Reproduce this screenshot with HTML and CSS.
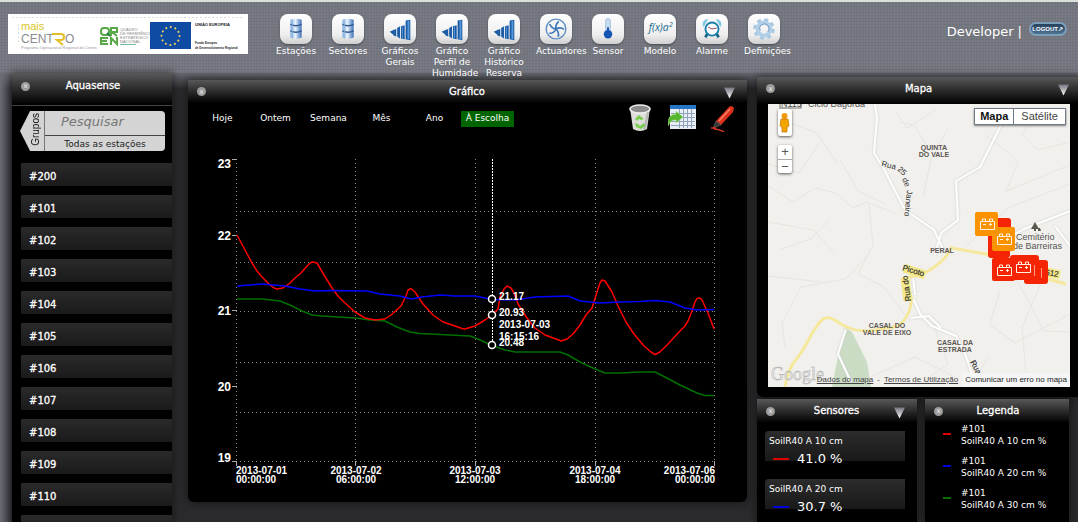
FILE: index.html
```html
<!DOCTYPE html>
<html lang="pt">
<head>
<meta charset="utf-8">
<title>Aquasense</title>
<link rel="stylesheet" href="styles.css">
</head>
<body>
<svg class="defs" width="0" height="0" aria-hidden="true">
  <defs>
    <linearGradient id="arrow" x1="0" y1="0" x2="0" y2="1"><stop offset="0" stop-color="#77737f"/><stop offset="1" stop-color="#fff"/></linearGradient>
    <linearGradient id="steel" x1="0" y1="0" x2="1" y2="0"><stop offset="0" stop-color="#7fb0e4"/><stop offset=".45" stop-color="#e9f4fe"/><stop offset="1" stop-color="#3a6fb7"/></linearGradient>
    <symbol id="tank" viewBox="0 0 32 32"><path fill="url(#steel)" d="M10 6q6-2 12 0v19q-6 3-12 0z"/><path fill="none" stroke="#31588f" stroke-width="1.500" d="M10 11q6 3 12 0M10 18q6 3 12 0"/><path stroke="#8fb0d8" d="M12 6v20"/></symbol>
    <symbol id="bars" viewBox="0 0 32 32"><path fill="#1c5ca6" d="M5 19l4-2v5zM9 17l3-1v8l-3-1zM13 15l3-2v13l-3-2zM17 13l4-1v15l-4-1zM22 7l5-1v22l-5-1z"/><path fill="#5797d7" d="M24 7h2v20h-2zM18 13h1v13h-1z"/></symbol>
  </defs>
</svg>

<header class="top">
  <svg class="banner" viewBox="0 0 240 40" role="img" aria-label="Mais Centro, QREN, União Europeia">
    <rect width="240" height="40" fill="#fff"/>
    <path stroke="#ddd" stroke-dasharray="2 2" d="M4 3.500H236M10.500 10v18"/>
    <g class="logo-text">
      <text x="13" y="16" font-size="11" fill="#d9c526">mais</text>
      <text x="13" y="29" font-size="12" fill="#8a8b8e">CENT</text>
      <text x="57" y="29" font-size="12" fill="#8a8b8e">O</text>
      <path fill="none" stroke="#e3bd28" stroke-width="2" d="M44 20h9q3 0 3 3t-3 3h-4l6 5"/>
      <text x="13" y="35" font-size="4" fill="#999">Programa Operacional Regional do Centro</text>
      <g fill="none" stroke="#59a94a" stroke-width="2"><rect x="93" y="14" width="8" height="7" rx="3"/><path stroke="#247c42" d="M99 19l3 3"/><path d="M103 22v-8h6v4h-5l5 4M100 24h-7v6h7M93 27h6M103 31v-7l6 6v-7"/></g>
      <g font-size="4" fill="#888"><text x="112" y="17">QUADRO</text><text x="112" y="21">DE REFERÊNCIA</text><text x="112" y="25">ESTRATÉGICO</text><text x="112" y="29">NACIONAL</text></g>
      <path stroke="#7bb99f" d="M112 30.500h16"/>
      <rect x="142" y="8" width="41" height="27" fill="#0f4aa3"/>
      <circle cx="162.500" cy="22" r="9" fill="none" stroke="#f4d65c" stroke-width="2" stroke-linecap="round" stroke-dasharray="0.100 4.612"/>
      <g fill="#222" font-weight="bold"><text x="187" y="12" font-size="4">UNIÃO EUROPEIA</text><text x="187" y="30" font-size="3">Fundo Europeu</text><text x="187" y="35" font-size="3">de Desenvolvimento Regional</text></g>
    </g>
  </svg>

  <nav class="menu">
    <a href="#"><svg><use href="#tank"/></svg><span>Estações</span></a>
    <a href="#"><svg><use href="#tank"/></svg><span>Sectores</span></a>
    <a href="#"><svg><use href="#bars"/></svg><span>Gráficos Gerais</span></a>
    <a href="#"><svg><use href="#bars"/></svg><span>Gráfico Perfil de Humidade</span></a>
    <a href="#"><svg><use href="#bars"/></svg><span>Gráfico Histórico Reserva</span></a>
    <a href="#"><svg viewBox="0 0 32 32"><g fill="none" stroke="#5f8fc6" stroke-width="1.500"><circle cx="16" cy="16" r="10.500"/><g stroke="#3c75b8" stroke-width="1.800"><path id="vane" d="M16 16q-1-5 3-8"/><use href="#vane" transform="rotate(72 16 16)"/><use href="#vane" transform="rotate(144 16 16)"/><use href="#vane" transform="rotate(216 16 16)"/><use href="#vane" transform="rotate(288 16 16)"/></g></g></svg><span>Actuadores</span></a>
    <a href="#"><svg viewBox="0 0 32 32"><rect x="13.500" y="5" width="5" height="16" rx="2" fill="#c5dbef" stroke="#a6bfd9"/><path stroke="#1954ad" stroke-width="2" d="M16 14v7"/><circle cx="16" cy="21.500" r="4.500" fill="#1556b4"/></svg><span>Sensor</span></a>
    <a href="#"><svg viewBox="0 0 32 32"><text class="formula" x="4" y="18">f(x)a²</text></svg><span>Modelo</span></a>
    <a href="#"><svg viewBox="0 0 32 32"><path fill="#7cc8e6" d="M6 11q0-5 6-6l-5 9zM26 11q0-5-6-6l5 9z"/><path stroke="#176386" stroke-width="3" d="M11 21l-2 4M21 21l2 4"/><circle cx="16" cy="16" r="7" fill="#f9fdff" stroke="#1c7fab" stroke-width="2"/><path fill="none" stroke="#a03b47" d="M12 14l4 2 5-1"/></svg><span>Alarme</span></a>
    <a href="#"><svg viewBox="0 0 32 32"><circle cx="16" cy="16" r="9.500" fill="none" stroke="#a6c7e4" stroke-width="4" stroke-dasharray="4 3.460"/><circle cx="16" cy="16" r="7" fill="none" stroke="#b2cfe8" stroke-width="4"/><path fill="none" stroke="#6793bd" d="M12 18a5 5 0 1 1 8 1"/></svg><span>Definições</span></a>
  </nav>

  <div class="user"><span>Developer |</span><button class="logout" type="button">LOGOUT↗</button></div>
</header>

<main class="board">
  <aside class="panel stations">
    <div class="bar"><button class="close" type="button" aria-label="Fechar">x</button><h2>Aquasense</h2></div>
    <form class="search">
      <button class="groups" type="button"><span>Grupos</span></button>
      <div class="fields">
        <input type="text" aria-label="Pesquisar" placeholder="Pesquisar">
        <button type="button">Todas as estações</button>
      </div>
    </form>
    <ul class="list">
      <li><a href="#">#200</a></li><li><a href="#">#101</a></li><li><a href="#">#102</a></li><li><a href="#">#103</a></li>
      <li><a href="#">#104</a></li><li><a href="#">#105</a></li><li><a href="#">#106</a></li><li><a href="#">#107</a></li>
      <li><a href="#">#108</a></li><li><a href="#">#109</a></li><li><a href="#">#110</a></li><li><a href="#" aria-label="Mais estações"></a></li>
    </ul>
  </aside>

  <section class="panel chart">
    <div class="bar foldable"><button class="close" type="button" aria-label="Fechar">x</button><h2>Gráfico</h2><button class="fold" type="button" aria-label="Recolher"><svg viewBox="0 0 12 12"><path fill="url(#arrow)" d="M0 0h12L6 12z"/></svg></button></div>
    <div class="tools">
      <div class="periods">
        <button type="button">Hoje</button><button type="button">Ontem</button><button type="button">Semana</button><button type="button">Mês</button><button type="button">Ano</button><button type="button" class="active">À Escolha</button>
      </div>
      <div class="actions">
        <button type="button" aria-label="Limpar"><svg viewBox="0 0 28 28"><path fill="#dededa" d="M4 4h20l-3 21q-7 4-14 0z"/><ellipse cx="14" cy="5" rx="10" ry="4" fill="#8b8d8b" stroke="#eee" stroke-width="1.500"/><path fill="#b5b7b3" d="M21 8h2l-3 17-3 1z"/><path fill="#79ce50" d="M9 15l4-4 5 4-3 1-2-1-2 2zM9 19l3 1 2 2 4-3 1 3-4 3-5-2z"/></svg></button>
        <button type="button" aria-label="Exportar"><svg viewBox="0 0 28 28"><path fill="#e8eef4" d="M2 1h26v24H2z"/><path fill="#2775c5" d="M2 1h26v4H2z"/><path stroke="#8fa4bc" d="M3 9.500h24M3 13.500h24M3 17.500h24M3 21.500h24M11.500 5v19M15.500 5v19M19.500 5v19M23.500 5v19"/><path fill="#56b62e" stroke="#b8e6a0" stroke-width=".5" d="M0 22q-1-12 8-12V7l7 6-7 6v-3q-5-1-8 6z"/></svg></button>
        <button type="button" aria-label="Editar"><svg viewBox="0 0 28 28"><path fill="#dc321c" d="M18 4q3-4 6 0l-1 4L11 21l-5-4z"/><path fill="none" stroke="#ff806a" stroke-width="1.500" d="M20 5L9 17"/><path fill="#383838" stroke="#777" stroke-width=".5" d="M6 17l5 4-8 3z"/><path fill="none" stroke="#d43220" stroke-width="1.500" d="M1 24l5 0-2 1q5 0 10 3"/></svg></button>
      </div>
    </div>
    <svg class="plot" viewBox="188 133 559 367" role="img" aria-label="Gráfico de humidade do solo">
      <g class="grid">
        <path d="M236.500 159V461M355.500 159V461M475.500 159V461M595.500 159V461M714.500 159V461"/>
        <path d="M236 211.500H715M236 262.500H715M236 311.500H715M236 362.500H715M236 412.500H715M236 461.500H715"/>
      </g>
      <path class="ticks" d="M232 159.500h5M232 235.500h5M232 310.500h5M232 386.500h5M232 461.500h5M236.500 461v5M355.500 461v5M475.500 461v5M595.500 461v5M714.500 461v5"/>
      <g class="labels y"><text x="231" y="168">23</text><text x="231" y="240">22</text><text x="231" y="315">21</text><text x="231" y="391">20</text><text x="231" y="462">19</text></g>
      <g class="labels"><text x="236" y="474">2013-07-01</text><text x="236" y="483">00:00:00</text></g>
      <g class="labels mid"><text x="356" y="474">2013-07-02</text><text x="356" y="483">06:00:00</text><text x="475" y="474">2013-07-03</text><text x="475" y="483">12:00:00</text><text x="595" y="474">2013-07-04</text><text x="595" y="483">18:00:00</text></g>
      <g class="labels end"><text x="715" y="474">2013-07-06</text><text x="715" y="483">00:00:00</text></g>
      <polyline class="line green" points="237,299 262,299 280,301 290,305 302,311 312,315 322,316 355,318 370,320 385,321 397,327 410,332 420,333.500 450,335 470,336 478,339 492,345.500 505,350 515,352 560,352 568,355 580,362 595,369 605,373 620,373 640,372 655,372 665,377 680,385 697,393 705,395.500 714,395.500"/>
      <polyline class="line red" points="237,235 245,250 252,263 257,271 262,277 270,285 274,288 277,289 283,288 290,283 295,278 301,273 308,265 311,262.500 313,262 317,263 324,275 332,288 338,296 344,302 355,312 365,318 375,320 385,319 391,315 401,306 406,296 408,290 411,288.500 415,292 423,304 433,315 443,322 455,326 462,328.500 465,329 475,326 485,320 492,315 498,309 500,297 504,289 507,286 511,288 514,293 518,304 527,318 535,328 545,335 556,339 561,341 567,339 573,334 580,325 586,315 592,308 597,292 600,283 602,280 605,281 612,292 618,306 626,322 634,334 644,346 651,352 655,354.500 660,352 668,344 680,331 685,326 688,321 692,311 695,302 697,298.500 700,298 702,300 708,313 714,329"/>
      <polyline class="line blue" points="237,286 250,285 262,284 285,286 300,289 315,291 330,290.500 367,291 380,294 400,296 411,299 422,297 440,295 455,296 475,296 485,298 492,299.500 515,300 535,297 568,296 580,301 600,303 620,302 640,301.500 655,300.500 670,302 685,308 697,310 714,309.500"/>
      <path class="cursor" d="M492.500 159V346"/>
      <g class="dots"><circle cx="492" cy="299" r="3.500"/><circle cx="492" cy="315" r="3.500"/><circle cx="492" cy="345" r="3.500"/></g>
      <g class="labels"><text x="499" y="300">21.17</text><text x="499" y="316">20.93</text><text x="499" y="328">2013-07-03</text><text x="499" y="340">16:15:16</text><text x="499" y="346">20.48</text></g>
    </svg>
  </section>

  <div class="side">
    <section class="panel mapbox">
      <div class="bar foldable"><button class="close" type="button" aria-label="Fechar">x</button><h2>Mapa</h2><button class="fold" type="button" aria-label="Recolher"><svg viewBox="0 0 12 12"><path fill="url(#arrow)" d="M0 0h12L6 12z"/></svg></button></div>
      <div class="map">
        <svg class="tiles" viewBox="768 104 302 283" preserveAspectRatio="xMidYMid slice" role="img" aria-label="Mapa das estações">
          <rect x="700" y="50" width="450" height="400" fill="#f1f0ec"/>
          <path fill="#cbdcc5" d="M845 327l7 5 15 30 4 25h-39l6-31z"/>
          <g class="minor">
            <path d="M768 186l25 16 22-14 21 5 17 15 13-6 29 11M782 120l35 13 21 31M840 160l18 31 26 12M895 111l12 17 30-19M930 151l-16-26-14-3M1038 107l-16 28 16 15 32-8M985 135l20 15 13 12M1018 162l-12 29 64-26M966 246l42-38 62-24M768 222l45 8 21 22M820 142l-21 31-31-9M785 347l-3-24 19-36 45-8 24-26M869 205l4 40-15 29 25 12 27 35M1000 290l-10 35 25 18 55-29M1040 285l-18 42 5 60M934 326l14 38-33 23M971 387l18-32M872 376l43-19 40 20M1014 275l30 56 26 1M768 276l54 6M779 250l32-11 18-19M948 128l-17 32-8 37"/>
          </g>
          <g class="road">
            <path d="M875 104l2 14-3 35 11 18 20 39 29 20 10 21M1003 121l-23 46-24 14 2 39M958 220l-17 13-6 22M1070 211l-46 18-27 15M972 284M920 267l-7 10 2 18M914 300l6 14 12 12 24 10 10 20 10 31"/>
            <path d="M846 329l-8 25 13 28M911 318l18-2 12 12M1055 226l15 20"/>
          </g>
          <path class="main-road" d="M785 387q2-18 13-30c10-13 15-30 25-38 8-5 15 5 24 8 18 8 33 2 52-1q14-14 12-30l-8-17 22-6q21-12 26-25l41 7 30 17 44 12"/>
          <g class="street"><text transform="translate(881 166) rotate(14)">Rua</text><text transform="translate(897 170) rotate(42)">25</text><text transform="translate(902 179) rotate(68)">de</text><text transform="translate(907 190) rotate(96)">Janeiro</text></g>
          <g class="street bold"><path class="halo" d="M908 301l-3-23M904 268l21 7M1046 272l14 3"/><text transform="translate(911 301) rotate(-98)">Rua do</text><text transform="translate(902 270) rotate(17)">Picoto</text><text transform="translate(1045 275) rotate(8)">512</text><text transform="translate(970 362) rotate(62)">Rua</text></g>
          <g class="place"><text x="934" y="150">QUINTA</text><text x="934" y="157">DO VALE</text><text x="942" y="253">PERAL</text><text x="887" y="328">CASAL DO</text><text x="887" y="335">VALE DE EIXO</text><text x="955" y="345">CASAL DA</text><text x="955" y="352">ESTRADA</text></g>
          <g class="poi"><rect x="780" y="98" width="21" height="10" fill="none" stroke="#777"/><text x="781" y="107">N115</text><text x="808" y="107">Ciclo Dagorda</text><text x="1016" y="240">Cemitério</text><text x="1013" y="249">de Barreiras</text><path fill="#59594f" d="M1035 222l4 7h-3v2h-2v-2h-3zM1038 228h2l1 3h-3z"/></g>
          <g fill="#f52405"><rect x="988" y="218" width="23" height="22" rx="3"/><rect x="988" y="236" width="22" height="22" rx="3"/><rect x="992" y="258" width="23" height="23" rx="2"/><rect x="1010" y="255" width="29" height="25" rx="3"/><rect x="1024" y="260" width="24" height="24" rx="3"/></g>
          <path stroke="#ff9b8a" d="M1034.500 265v11M1041.500 268v10"/>
          <g fill="#fb9200"><rect x="975" y="212" width="23" height="24" rx="2"/><rect x="992" y="227" width="23" height="24" rx="2"/></g>
          <g fill="none" stroke="#fff4df"><g id="bat"><path d="M980.500 221.500h14v8h-14zM982.500 221v-2h3v2M989.500 221v-2h3v2M983 224.500h3M989 224.500h3M990.500 223v3"/></g><use href="#bat" x="17" y="15"/><use href="#bat" x="17" y="46"/><use href="#bat" x="36" y="43"/></g>
          <text class="brand" x="771" y="380">Google</text>
        </svg>
        <button class="pegman" type="button" aria-label="Street View"><svg viewBox="0 0 13 24"><circle cx="6.500" cy="5" r="3" fill="#ef9b08"/><path fill="#f5a500" stroke="#bd7100" stroke-width=".7" d="M3 8h7l1 7-2 1v5H4v-5l-2-1z"/></svg></button>
        <div class="zoom"><button type="button" aria-label="Aproximar">+</button><button type="button" aria-label="Afastar">−</button></div>
        <div class="kinds"><button type="button" class="on">Mapa</button><button type="button">Satélite</button></div>
        <div class="credits"><a href="#">Dados do mapa</a><span>-</span><a href="#">Termos de Utilização</a><a href="#" class="report">Comunicar um erro no mapa</a></div>
      </div>
    </section>

    <div class="lower">
      <section class="panel sensors">
        <div class="bar foldable"><button class="close" type="button" aria-label="Fechar">x</button><h2>Sensores</h2><button class="fold" type="button" aria-label="Recolher"><svg viewBox="0 0 12 12"><path fill="url(#arrow)" d="M0 0h12L6 12z"/></svg></button></div>
        <article><h3>SoilR40 A 10 cm</h3><p><i class="red"></i>41.0 %</p></article>
        <article><h3>SoilR40 A 20 cm</h3><p><i class="blue"></i>30.7 %</p></article>
      </section>
      <section class="panel legend">
        <div class="bar"><button class="close" type="button" aria-label="Fechar">x</button><h2>Legenda</h2></div>
        <ul>
          <li><i class="red"></i><span>#101<br>SoilR40 A 10 cm %</span></li>
          <li><i class="blue"></i><span>#101<br>SoilR40 A 20 cm %</span></li>
          <li><i class="green"></i><span>#101<br>SoilR40 A 30 cm %</span></li>
        </ul>
      </section>
    </div>
  </div>
</main>
</body>
</html>
```

FILE: styles.css
```css
* { box-sizing: border-box; }
html, body { height: 100%; }
body {
  margin: 0;
  display: flex;
  flex-direction: column;
  overflow: hidden;
  color: #fff;
  font: 10px/12px "DejaVu Sans", sans-serif;
  border-top: 2px solid #d9e2da;
  background:
    repeating-linear-gradient(90deg, rgba(255,255,255,.04) 0 1px, transparent 1px 3px),
    repeating-linear-gradient(rgba(0,0,0,.05) 0 1px, transparent 1px 3px),
    #74777f;
}
.defs { position: absolute; }
button, input { font: inherit; color: inherit; padding: 0; border: 0; background: none; }
button { cursor: pointer; }
a { color: inherit; text-decoration: none; }
h2, h3, p, ul { margin: 0; padding: 0; font: inherit; list-style: none; }

/* header */
.top { position: relative; z-index: 1; display: flex; align-items: flex-start; padding: 12px 11px 0 8px; height: 71px; flex: none; }
.banner { width: 240px; height: 40px; flex: none; }
.logo-text { font-family: "Liberation Sans", sans-serif; }
.menu { display: flex; gap: 12px; margin-left: 28px; }
.menu a { width: 40px; display: flex; flex-direction: column; align-items: center; }
.menu svg {
  width: 32px; height: 30px; flex: none; margin-bottom: 2px; border-radius: 8px;
  background: linear-gradient(#fff, #eee 70%, #cfcfcf);
  box-shadow: 0 1px 2px rgba(0,0,0,.4);
}
.menu span { width: 40px; line-height: 11px; text-align: center; font-size: 9px; }
.formula { font: italic 11px "Open Sans", sans-serif; fill: #17678f; }
.user { display: flex; gap: 7px; margin-left: auto; padding-top: 8px; font-size: 13px; line-height: 20px; }
.logout {
  width: 38px; height: 14px; border-radius: 7px; border: 2px solid #7e9fba;
  background: linear-gradient(#27415b, #4d7495);
  font: bold 6px/10px "Liberation Sans", sans-serif; text-align: right; padding-right: 2px;
}

/* panels */
.board {
  flex: 1; min-height: 0; display: grid;
  grid-template-columns: 160px minmax(0, 1fr) 321px;
  padding-left: 12px;
  background:
    linear-gradient(rgba(110,112,120,.9), transparent 16px),
    linear-gradient(90deg, #6b6d75, #2b2b2e 14px);
}
.panel { background: #000; box-shadow: 0 0 8px 1px rgba(0,0,0,.5); }
.bar {
  display: flex; align-items: center; height: 24px; padding: 0 12px 0 9px;
  background: linear-gradient(#58585a, #2b2b2b 50%, #000);
}
.bar h2 { flex: 1; text-align: center; font-size: 10px; line-height: 14px; padding-right: 4px; -webkit-text-stroke: 0.3px #fff; }
.foldable h2 { padding: 0 0 0 4px; }
.close {
  width: 9px; height: 9px; border-radius: 50%; background: #9c9c9c; color: #eee;
  font-size: 7px; line-height: 8px; text-align: center;
}
.fold { width: 11px; height: 12px; margin-top: 3px; }
.fold svg { display: block; width: 11px; height: 12px; }

/* station list */
.stations { overflow: hidden; }
.stations .bar { height: 32px; padding-bottom: 6px; }
.search { display: flex; height: 50px; padding: 5px 7px 4px 8px; border-top: 1px solid #444; margin-bottom: 8px; }
.groups {
  width: 24px; background: #d4d4d4; color: #111; padding-left: 8px;
  clip-path: polygon(0 50%, 42% 0, 100% 0, 100% 100%, 42% 100%);
}
.groups span { writing-mode: vertical-rl; transform: rotate(180deg); font: 10px/14px "Liberation Sans", sans-serif; }
.fields { flex: 1; min-width: 0; display: flex; flex-direction: column; border-left: 1px solid #777; border-radius: 0 4px 4px 0; background: #d4d4d4; color: #222; overflow: hidden; }
.fields input { width: 100%; height: 25px; padding: 0 0 4px 16px; font-size: 13px; font-style: italic; border-bottom: 1px solid #444; }
.fields input::placeholder { color: #777; opacity: 1; }
.fields button { height: 15px; font-size: 9px; line-height: 12px; }
.list { padding-left: 9px; display: flex; flex-direction: column; gap: 9px; }
.list a { display: block; height: 23px; padding-left: 8px; line-height: 27px; font-size: 10px; -webkit-text-stroke: 0.3px #fff; background: linear-gradient(#2a2a2a, #1a1a1a); }

/* chart */
.chart { align-self: start; margin: 7px 10px 0 16px; border-radius: 0 0 6px 6px; padding-bottom: 2px; }
.chart .bar { height: 23px; }
.tools { display: flex; justify-content: space-between; padding: 0 9px 0 8px; height: 30px; font-size: 9px; }
.periods { display: flex; align-items: flex-start; padding-top: 8px; }
.periods button { height: 16px; line-height: 12px; padding-bottom: 3px; width: 53px; }
.periods .active { background: #006400; }
.actions { display: flex; gap: 14px; }
.actions svg { display: block; width: 28px; height: 28px; }
.plot { display: block; width: 100%; height: auto; }
.grid path { stroke: #858585; stroke-dasharray: 1 3; }
.ticks { stroke: #aaa; }
.labels { font: bold 10px "Liberation Sans", sans-serif; fill: #fff; }
.labels.y { font-size: 12px; text-anchor: end; }
.labels.mid { text-anchor: middle; }
.labels.end { text-anchor: end; }
.line { fill: none; stroke-width: 1.5; stroke-linejoin: round; }
.line.red { stroke: #f00; }
.line.blue { stroke: #00f; }
.line.green { stroke: #007000; }
.cursor { stroke: #fff; stroke-dasharray: 2 1; }
.dots circle { fill: #000; stroke: #fff; stroke-width: 1.5; }

/* map */
.side { display: flex; flex-direction: column; min-height: 0; padding-top: 4px; gap: 2px; }
.mapbox { padding-bottom: 10px; border-radius: 0 0 0 6px; }
.mapbox .bar { height: 27px; padding-right: 9px; padding-bottom: 4px; }
.map { position: relative; margin: 0 8px 0 11px; height: 283px; overflow: hidden; color: #444; font-family: "Liberation Sans", sans-serif; }
.tiles { display: block; width: 100%; height: 100%; }
.minor { fill: none; stroke: #e6e5e1; stroke-linejoin: round; }
.road { fill: none; stroke: #fff; stroke-width: 2; filter: drop-shadow(0 0 1px #ccc); stroke-linejoin: round; }
.main-road { fill: none; stroke: #f5e89c; stroke-width: 3; }
.street, .poi { font: 8px "Liberation Sans", sans-serif; fill: #555; }
.street { fill: #333; }
.street.bold { stroke: #333; stroke-width: .2; }
.poi { font-size: 9px; }
.halo { fill: none; stroke: #f3e887; stroke-width: 9; }
.place { font: bold 7px "Liberation Sans", sans-serif; fill: #5c5652; text-anchor: middle; }
.brand { font: 18px "Liberation Serif", serif; fill: #eee; stroke: #aaa; stroke-width: .5; }
.pegman, .zoom, .kinds, .credits { position: absolute; }
.pegman, .zoom { left: 10px; width: 14px; background: #fff; border-radius: 2px; box-shadow: 0 1px 3px #555; }
.pegman { top: 5px; height: 27px; }
.pegman svg { display: block; width: 13px; height: 24px; }
.zoom { top: 41px; display: flex; flex-direction: column; }
.zoom button { height: 14px; font-size: 13px; line-height: 12px; color: #555; }
.zoom button + button { border-top: 1px solid #aaa; }
.kinds { top: 4px; right: 4px; display: flex; background: #fff; border: 1px solid #717b87; box-shadow: 0 1px 2px #777; }
.kinds button { height: 15px; padding: 0 7px; font-size: 11px; line-height: 15px; }
.kinds .on { font-weight: bold; color: #111; padding: 0 5px; border-right: 1px solid #717b87; }
.credits { right: 0; bottom: 0; display: flex; gap: 4px; font-size: 8px; line-height: 14px; }
.credits a { text-decoration: underline; }
.credits .report { text-decoration: none; background: #f5f5f5; padding: 0 3px; color: #222; }

/* sensors and legend */
.lower { flex: 1; min-height: 0; display: flex; align-items: stretch; gap: 8px; padding-right: 9px; }
.lower .bar { height: 24px; }
.sensors { flex: 10; padding-bottom: 8px; }
.legend { flex: 9; }
.sensors article { height: 30px; margin: 8px 12px 18px 8px; padding: 3px 4px; border-radius: 4px 0 0 0; background: linear-gradient(#2c2c2c, #191919); }
.sensors article + article { margin-top: 0; }
.sensors h3 { font-size: 9px; line-height: 14px; }
.sensors p { display: flex; align-items: center; gap: 8px; padding-left: 4px; font-size: 13px; line-height: 22px; }
.sensors i { width: 16px; height: 2px; }
i.red { background: #e00000; }
i.blue { background: #00d; }
i.green { background: #007000; }
.legend li { display: flex; align-items: flex-start; gap: 10px; height: 32px; padding-left: 18px; font-size: 9px; line-height: 12px; }
.legend i { width: 8px; height: 2px; margin-top: 10px; flex: none; }
```
